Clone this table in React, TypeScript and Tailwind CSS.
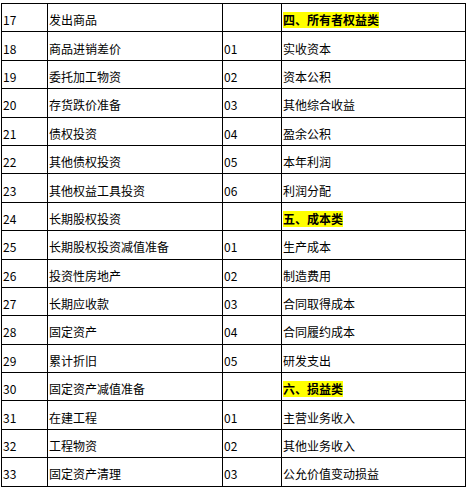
const rows: [string, string, string, string, boolean][] = [
  ["17", "发出商品", "", "四、所有者权益类", true],
  ["18", "商品进销差价", "01", "实收资本", false],
  ["19", "委托加工物资", "02", "资本公积", false],
  ["20", "存货跌价准备", "03", "其他综合收益", false],
  ["21", "债权投资", "04", "盈余公积", false],
  ["22", "其他债权投资", "05", "本年利润", false],
  ["23", "其他权益工具投资", "06", "利润分配", false],
  ["24", "长期股权投资", "", "五、成本类", true],
  ["25", "长期股权投资减值准备", "01", "生产成本", false],
  ["26", "投资性房地产", "02", "制造费用", false],
  ["27", "长期应收款", "03", "合同取得成本", false],
  ["28", "固定资产", "04", "合同履约成本", false],
  ["29", "累计折旧", "05", "研发支出", false],
  ["30", "固定资产减值准备", "", "六、损益类", true],
  ["31", "在建工程", "01", "主营业务收入", false],
  ["32", "工程物资", "02", "其他业务收入", false],
  ["33", "固定资产清理", "03", "公允价值变动损益", false],
];

const cell = "border border-black px-px pt-[5px] pb-0 align-middle whitespace-nowrap";

export default function App() {
  return (
    <div className="bg-white w-[469px] h-[490px] pt-[3px] pl-px">
      <table
        className="border-collapse text-[12px] text-black leading-none"
        style={{ fontFamily: '"Noto Sans CJK SC", "DejaVu Sans", sans-serif' }}
      >
        <colgroup>
          <col className="w-[46px]" />
          <col className="w-[175px]" />
          <col className="w-[59px]" />
          <col className="w-[184px]" />
        </colgroup>
        <tbody>
          {rows.map(([no, name, code, right, head]) => (
            <tr key={no} className="h-[28.4px]">
              <td className={cell}>{no}</td>
              <td className={cell}>{name}</td>
              <td className={cell}>{code}</td>
              <td className={cell}>
                {head ? (
                  <span className="bg-[#ffff00] font-bold inline-block py-[2px]">{right}</span>
                ) : (
                  right
                )}
              </td>
            </tr>
          ))}
        </tbody>
      </table>
    </div>
  );
}
